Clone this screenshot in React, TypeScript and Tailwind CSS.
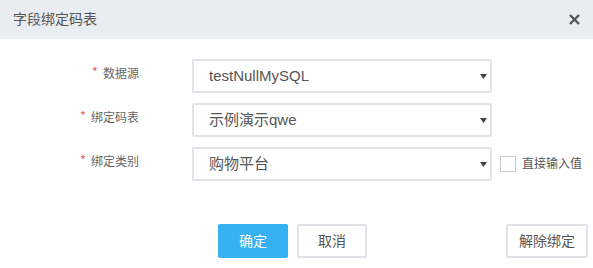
import { useState } from 'react';

const font = { fontFamily: '"Liberation Sans", "Noto Sans CJK SC", sans-serif' };

function Arrow() {
  return (
    <svg width="7" height="5" viewBox="0 0 7 5" className="shrink-0">
      <path d="M0 0 L7 0 L3.5 5 Z" fill="#444" />
    </svg>
  );
}

function Row({ label, value, extra }: { label: string; value: string; extra?: React.ReactNode }) {
  return (
    <div className="flex items-center h-[34px]">
      <div className="w-[139px] flex justify-end items-center pb-[5px] text-[12px] text-[#666]">
        <span className="text-[#e4393c] text-[11px] mr-[6px] -translate-y-[2px]">*</span>
        {label}
      </div>
      <div className="ml-[53px] w-[300px] h-[34px] border-2 border-[#e0e4e9] rounded-[2px] bg-white flex items-center justify-between pl-[15px] pr-[3px] text-[15px] text-[#555]">
        <span>{value}</span>
        <Arrow />
      </div>
      {extra}
    </div>
  );
}

export default function App() {
  const [direct, setDirect] = useState(false);

  return (
    <div className="w-[593px] h-[268px] bg-white overflow-hidden" style={font}>
      <div className="h-[39px] bg-[#e9ecf0] flex items-center justify-between pl-[13px] pr-[13px]">
        <span className="text-[14px] text-[#555]">字段绑定码表</span>
        <svg width="11" height="11" viewBox="0 0 11 11">
          <path d="M1 1 L10 10 M10 1 L1 10" stroke="#555" strokeWidth="2.4" />
        </svg>
      </div>

      <div className="pt-[20px] flex flex-col gap-[10px]">
        <Row label="数据源" value="testNullMySQL" />
        <Row label="绑定码表" value="示例演示qwe" />
        <Row
          label="绑定类别"
          value="购物平台"
          extra={
            <label className="flex items-center ml-[8px] cursor-pointer" onClick={() => setDirect(!direct)}>
              <span className="w-[16px] h-[16px] border border-[#ccc] bg-white flex items-center justify-center text-[11px] text-[#37b1f2]">
                {direct ? '✓' : ''}
              </span>
              <span className="ml-[6px] text-[12px] text-[#555]">直接输入值</span>
            </label>
          }
        />
      </div>

      <div className="flex items-center mt-[43px] pl-[218px] pr-[5px]">
        <button className="w-[70px] h-[34px] bg-[#38b1f2] text-white text-[14px] rounded-[2px]">确定</button>
        <button className="ml-[9px] w-[70px] h-[34px] border-2 border-[#e0e4e9] bg-white text-[#555] text-[14px] rounded-[2px]">
          取消
        </button>
        <button className="ml-auto w-[82px] h-[34px] border-2 border-[#e0e4e9] bg-white text-[#555] text-[14px] rounded-[2px]">
          解除绑定
        </button>
      </div>
    </div>
  );
}
